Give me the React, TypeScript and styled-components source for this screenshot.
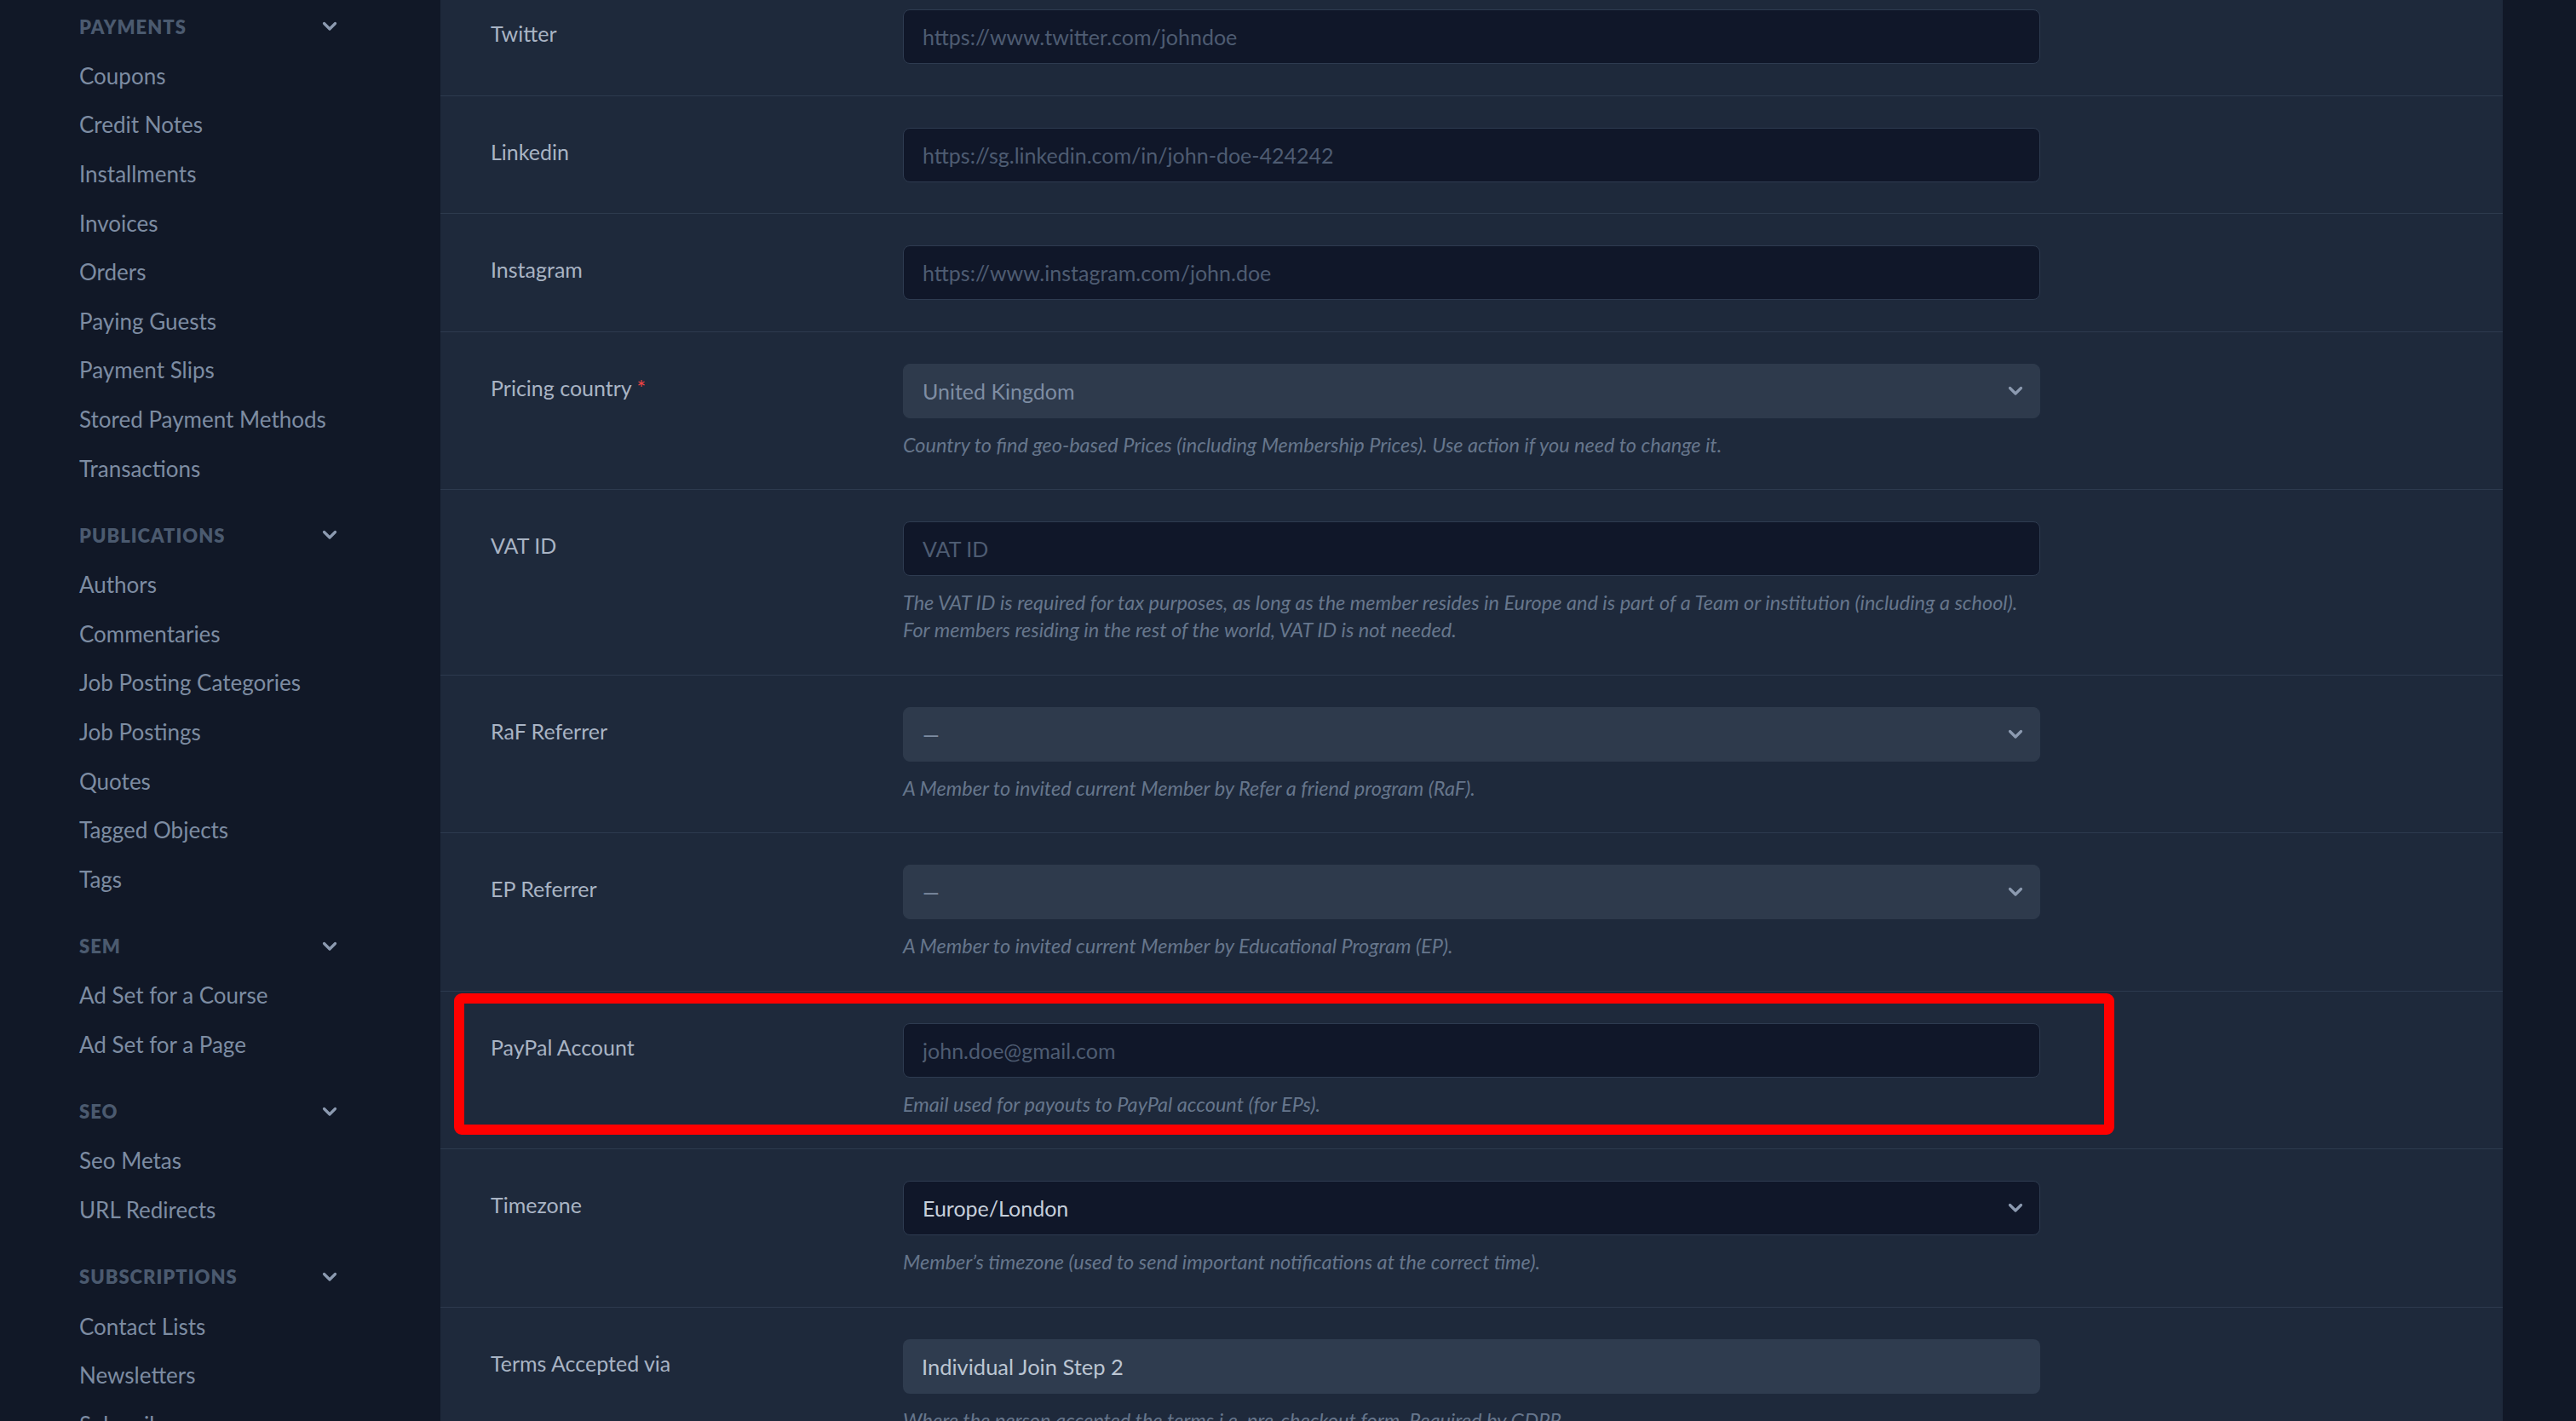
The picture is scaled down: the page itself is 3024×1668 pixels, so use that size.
import React from "react";
import styled, { createGlobalStyle } from "styled-components";

const GlobalStyle = createGlobalStyle`
  * { box-sizing: border-box; }
  html, body { margin: 0; padding: 0; background: #111827; }
  body { font-family: Lato, "Noto Sans", sans-serif; overflow: hidden; }
`;

type Section = { title: string; items: string[] };

const sections: Section[] = [
  {
    title: "Payments",
    items: [
      "Coupons",
      "Credit Notes",
      "Installments",
      "Invoices",
      "Orders",
      "Paying Guests",
      "Payment Slips",
      "Stored Payment Methods",
      "Transactions",
    ],
  },
  {
    title: "Publications",
    items: [
      "Authors",
      "Commentaries",
      "Job Posting Categories",
      "Job Postings",
      "Quotes",
      "Tagged Objects",
      "Tags",
    ],
  },
  { title: "SEM", items: ["Ad Set for a Course", "Ad Set for a Page"] },
  { title: "SEO", items: ["Seo Metas", "URL Redirects"] },
  { title: "Subscriptions", items: ["Contact Lists", "Newsletters", "Subscribers"] },
];

type Field = {
  label: string;
  kind: "input" | "select" | "readonly";
  value?: string;
  placeholder?: string;
  tone?: "dark" | "muted";
  required?: boolean;
  help?: React.ReactNode;
  highlight?: boolean;
};

const fields: Field[] = [
  { label: "Twitter", kind: "input", placeholder: "https://www.twitter.com/johndoe" },
  { label: "Linkedin", kind: "input", placeholder: "https://sg.linkedin.com/in/john-doe-424242" },
  { label: "Instagram", kind: "input", placeholder: "https://www.instagram.com/john.doe" },
  {
    label: "Pricing country",
    kind: "select",
    value: "United Kingdom",
    tone: "muted",
    required: true,
    help: "Country to find geo-based Prices (including Membership Prices). Use action if you need to change it.",
  },
  {
    label: "VAT ID",
    kind: "input",
    placeholder: "VAT ID",
    help: (
      <>
        The VAT ID is required for tax purposes, as long as the member resides in Europe and is part of a Team or
        institution (including a school).
        <br />
        For members residing in the rest of the world, VAT ID is not needed.
      </>
    ),
  },
  {
    label: "RaF Referrer",
    kind: "select",
    value: "—",
    tone: "muted",
    help: "A Member to invited current Member by Refer a friend program (RaF).",
  },
  {
    label: "EP Referrer",
    kind: "select",
    value: "—",
    tone: "muted",
    help: "A Member to invited current Member by Educational Program (EP).",
  },
  {
    label: "PayPal Account",
    kind: "input",
    placeholder: "john.doe@gmail.com",
    help: "Email used for payouts to PayPal account (for EPs).",
    highlight: true,
  },
  {
    label: "Timezone",
    kind: "select",
    value: "Europe/London",
    tone: "dark",
    help: "Member’s timezone (used to send important notifications at the correct time).",
  },
  {
    label: "Terms Accepted via",
    kind: "readonly",
    value: "Individual Join Step 2",
    help: "Where the person accepted the terms i.e. pre-checkout form. Required by GDPR.",
  },
];

const Chevron = () => (
  <svg width={18} height={12} viewBox="0 0 18 12" fill="none">
    <path d="M2.5 2.5 L9 9 L15.5 2.5" stroke="#8c9ab0" strokeWidth="3.2" strokeLinecap="round" strokeLinejoin="round" />
  </svg>
);

const App = () => {
  return (
    <Layout>
      <GlobalStyle />
      <Sidebar>
        {sections.map((s) => (
          <NavSection key={s.title}>
            <NavHeader>
              <NavTitle>{s.title}</NavTitle>
              <Chevron />
            </NavHeader>
            {s.items.map((item) => (
              <NavItem key={item}>{item}</NavItem>
            ))}
          </NavSection>
        ))}
      </Sidebar>
      <Main>
        <Panel>
          {fields.map((f) => (
            <Row key={f.label}>
              <LabelCell>
                {f.label}
                {f.required && <Required> *</Required>}
              </LabelCell>
              <FieldCell>
                {f.kind === "input" && <TextInput readOnly placeholder={f.placeholder} />}
                {f.kind === "select" && (
                  <SelectBox $tone={f.tone || "dark"}>
                    <SelectValue $tone={f.tone || "dark"}>{f.value}</SelectValue>
                    <Chevron />
                  </SelectBox>
                )}
                {f.kind === "readonly" && <ReadonlyBox>{f.value}</ReadonlyBox>}
                {f.help && <Help>{f.help}</Help>}
              </FieldCell>
              {f.highlight && <Highlight />}
            </Row>
          ))}
        </Panel>
      </Main>
    </Layout>
  );
};

const Layout = styled.div`
  display: flex;
  width: 3024px;
  height: 1668px;
  overflow: hidden;
  background: #111827;
`;

const Sidebar = styled.nav`
  flex: none;
  width: 517px;
  padding: 2px 121px 0 93px;
`;

const NavSection = styled.div`
  margin-bottom: 21px;
`;

const NavHeader = styled.div`
  display: flex;
  align-items: center;
  justify-content: space-between;
  height: 58px;
`;

const NavTitle = styled.span`
  font-size: 22px;
  font-weight: 800;
  letter-spacing: 1px;
  text-transform: uppercase;
  color: #4b5a6f;
`;

const NavItem = styled.div`
  display: flex;
  align-items: center;
  height: 57.6px;
  font-size: 26px;
  color: #7d8ca2;
  white-space: nowrap;
`;

const Main = styled.main`
  flex: 1;
  display: flex;
  align-items: flex-start;
`;

const Panel = styled.section`
  width: 2421px;
  margin-top: -26px;
  background: #1e293b;
`;

const Row = styled.div`
  position: relative;
  display: flex;
  padding: 37px 0 36.5px;
  border-bottom: 1px solid #2d3a4e;
`;

const LabelCell = styled.div`
  flex: none;
  width: 543px;
  padding: 10px 0 0 59px;
  font-size: 25px;
  line-height: 36px;
  color: #a9b4c4;
`;

const Required = styled.span`
  color: #ef4444;
`;

const FieldCell = styled.div`
  flex: none;
  width: 1335px;
`;

const TextInput = styled.input`
  display: block;
  width: 100%;
  height: 64px;
  padding: 0 22px;
  border: 1px solid #2e3b50;
  border-radius: 8px;
  background: #101729;
  font-family: Lato, "Noto Sans", sans-serif;
  font-size: 25px;
  color: #c3ccd8;
  outline: none;
  &::placeholder {
    color: #4e5c72;
  }
`;

const SelectBox = styled.div<{ $tone: "dark" | "muted" }>`
  display: flex;
  align-items: center;
  justify-content: space-between;
  height: 64px;
  padding: 0 19px 0 22px;
  border: 1px solid ${(p) => (p.$tone === "dark" ? "#2e3b50" : "#2e3a4c")};
  border-radius: 8px;
  background: ${(p) => (p.$tone === "dark" ? "#101729" : "#2e3a4c")};
`;

const SelectValue = styled.span<{ $tone: "dark" | "muted" }>`
  font-size: 25px;
  color: ${(p) => (p.$tone === "dark" ? "#c6cfdb" : "#7e8da3")};
`;

const ReadonlyBox = styled.div`
  display: flex;
  align-items: center;
  height: 64px;
  padding: 0 22px;
  border-radius: 8px;
  background: #2f3c4f;
  font-size: 25.5px;
  color: #bcc6d3;
`;

const Help = styled.p`
  margin: 15px 0 0;
  font-size: 23.5px;
  font-style: italic;
  line-height: 32px;
  color: #66768c;
`;

const Highlight = styled.div`
  position: absolute;
  top: 2px;
  left: 16px;
  width: 1949px;
  height: 166px;
  border: 12px solid #ff0000;
  border-radius: 9px;
  pointer-events: none;
`;

export default App;
